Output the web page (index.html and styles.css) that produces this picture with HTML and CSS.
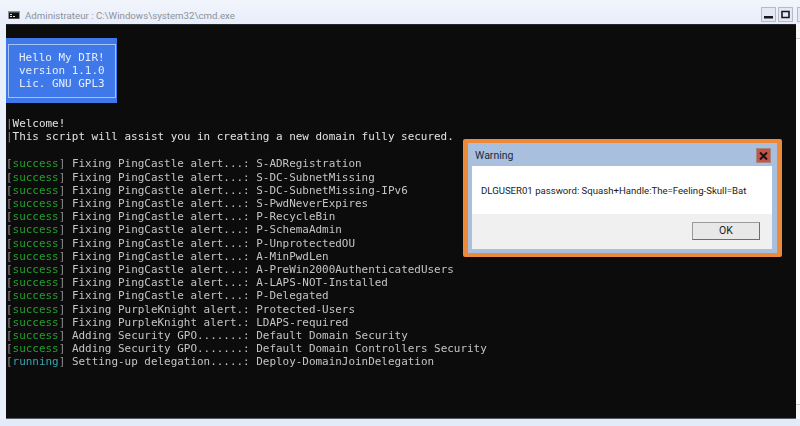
FILE: index.html
```html
<!DOCTYPE html>
<html lang="fr">
<head>
<meta charset="utf-8">
<title>cmd.exe</title>
<link rel="stylesheet" href="styles.css">
</head>
<body>
<div class="window">
  <header class="titlebar">
    <svg class="app-icon" width="12" height="8" viewBox="0 0 12 8"><rect width="12" height="8" fill="#8f939b"/><rect x="1" y="1.5" width="10" height="6" fill="#101010"/><path d="M2 3.5h2M2 5.5h2M5 5.5h2" stroke="#e8e8e8" stroke-width="1"/></svg>
    <span class="title">Administrateur : C:\Windows\system32\cmd.exe</span>
    <div class="controls">
      <span class="ctl"><svg width="9" height="9" viewBox="0 0 9 9"><rect x="0" y="6" width="9" height="2.5" fill="#15171c"/></svg></span>
      <span class="ctl"><svg width="9" height="9" viewBox="0 0 9 9"><path d="M1 1.5h7v6h-7z" fill="none" stroke="#15171c" stroke-width="1.6"/></svg></span>
      <span class="ctl ctl-close"><svg width="9" height="9" viewBox="0 0 9 9"><path d="M1 1l7 7M8 1l-7 7" stroke="#15171c" stroke-width="1.8"/></svg></span>
    </div>
  </header>
  <div class="body">
    <main class="terminal">
      <div class="banner"><div class="banner-inner">Hello My DIR!
version 1.1.0
Lic. GNU GPL3</div></div>
      <div class="intro"><span class="pipe">|</span>Welcome!
<span class="pipe">|</span>This script will assist you in creating a new domain fully secured.</div>
      <div class="log"><span class="br">[</span><span class="ok">success</span><span class="br">]</span> Fixing PingCastle alert...: S-ADRegistration
<span class="br">[</span><span class="ok">success</span><span class="br">]</span> Fixing PingCastle alert...: S-DC-SubnetMissing
<span class="br">[</span><span class="ok">success</span><span class="br">]</span> Fixing PingCastle alert...: S-DC-SubnetMissing-IPv6
<span class="br">[</span><span class="ok">success</span><span class="br">]</span> Fixing PingCastle alert...: S-PwdNeverExpires
<span class="br">[</span><span class="ok">success</span><span class="br">]</span> Fixing PingCastle alert...: P-RecycleBin
<span class="br">[</span><span class="ok">success</span><span class="br">]</span> Fixing PingCastle alert...: P-SchemaAdmin
<span class="br">[</span><span class="ok">success</span><span class="br">]</span> Fixing PingCastle alert...: P-UnprotectedOU
<span class="br">[</span><span class="ok">success</span><span class="br">]</span> Fixing PingCastle alert...: A-MinPwdLen
<span class="br">[</span><span class="ok">success</span><span class="br">]</span> Fixing PingCastle alert...: A-PreWin2000AuthenticatedUsers
<span class="br">[</span><span class="ok">success</span><span class="br">]</span> Fixing PingCastle alert...: A-LAPS-NOT-Installed
<span class="br">[</span><span class="ok">success</span><span class="br">]</span> Fixing PingCastle alert...: P-Delegated
<span class="br">[</span><span class="ok">success</span><span class="br">]</span> Fixing PurpleKnight alert.: Protected-Users
<span class="br">[</span><span class="ok">success</span><span class="br">]</span> Fixing PurpleKnight alert.: LDAPS-required
<span class="br">[</span><span class="ok">success</span><span class="br">]</span> Adding Security GPO.......: Default Domain Security
<span class="br">[</span><span class="ok">success</span><span class="br">]</span> Adding Security GPO.......: Default Domain Controllers Security
<span class="br">[</span><span class="run">running</span><span class="br">]</span> Setting-up delegation.....: Deploy-DomainJoinDelegation</div>
    </main>
    <div class="scrollbar">
      <div class="scroll-btn scroll-up"></div>
      <div class="scroll-track"></div>
      <div class="scroll-btn scroll-down"></div>
    </div>
  </div>
  <div class="footer"></div>
  <section class="dialog">
    <div class="dialog-frame">
      <div class="dialog-title">
        <span>Warning</span>
        <span class="dialog-close"><svg width="9" height="8" viewBox="0 0 9 8"><path d="M1 .5l7 7M8 .5l-7 7" stroke="#1d1012" stroke-width="2"/></svg></span>
      </div>
      <div class="dialog-message">DLGUSER01 password: Squash+Handle:The=Feeling-Skull=Bat</div>
      <div class="dialog-actions"><span class="ok-button">OK</span></div>
    </div>
  </section>
</div>
</body>
</html>
```
FILE: styles.css
```css
html, body {
  margin: 0;
  padding: 0;
  background: #e9effb;
}

.window {
  position: relative;
  width: 800px;
  height: 426px;
  overflow: hidden;
  display: flex;
  flex-direction: column;
  background: #e9effb;
}

.titlebar {
  height: 24px;
  flex: none;
  display: flex;
  align-items: center;
  padding-left: 8px;
  box-sizing: border-box;
  background: linear-gradient(#f2f5fc, #e7edfa);
}

.app-icon {
  flex: none;
  margin: 5px 5px 0 0;
}

.title {
  font: 9.7px Roboto, "Liberation Sans", sans-serif;
  color: #8d929c;
  white-space: nowrap;
  margin-top: 6px;
}

.controls {
  margin-left: auto;
  margin-right: -12px;
  margin-top: 5px;
  display: flex;
}

.ctl {
  width: 13px;
  height: 13px;
  border: 1px solid #b4bac6;
  display: flex;
  align-items: center;
  justify-content: center;
  background: #e3e8f3;
  margin-left: 2px;
}

.ctl-close {
  margin-left: 4px;
}

.body {
  height: 395px;
  flex: none;
  display: flex;
  padding-left: 6px;
}

.terminal {
  width: 790px;
  flex: none;
  box-sizing: border-box;
  background: #0c0c0c;
  border-top: 1px solid #23262b;
  border-bottom: 1px solid #555a63;
  color: #cfcfcf;
  font: 10.95px/13.2px "DejaVu Sans Mono", "Liberation Mono", monospace;
  filter: blur(0.35px);
}

.banner {
  width: 111px;
  height: 65px;
  margin-top: 13px;
  padding: 6px 1px 5px 2px;
  box-sizing: border-box;
  background: #3f78e8;
}

.banner-inner {
  height: 100%;
  box-sizing: border-box;
  border: 1px solid #a9c2f2;
  padding: 6px 0 0 10px;
  color: #e6eefc;
  white-space: pre;
}

.intro {
  margin-top: 14px;
  color: #e2e2e2;
  white-space: pre;
}

.pipe {
  color: #8a8a8a;
}

.log {
  margin-top: 14px;
  color: #c4c4c4;
  white-space: pre;
}

.br {
  color: #8f8f8f;
}

.ok {
  color: #23a02c;
}

.run {
  color: #35a6b4;
}

.scrollbar {
  flex: 1;
  display: flex;
  flex-direction: column;
  background: #fbfbfc;
}

.scroll-btn {
  height: 14px;
  flex: none;
  background: #f6f6f7;
}

.scroll-up {
  border-bottom: 1px solid #cfcfd2;
}

.scroll-down {
  border-top: 1px solid #cfcfd2;
}

.scroll-track {
  flex: 1;
}

.footer {
  flex: 1;
  background: #e3eafa;
}

.dialog {
  position: absolute;
  left: 463px;
  top: 139px;
  width: 319px;
  height: 118px;
  box-sizing: border-box;
  padding: 4px 5px;
  background: #ed8a3a;
  border-radius: 2px;
}

.dialog-frame {
  height: 100%;
  box-sizing: border-box;
  display: flex;
  flex-direction: column;
  padding: 0 5px 4px 4px;
  background: #a8c0de;
  font-family: Roboto, "Liberation Sans", sans-serif;
}

.dialog-title {
  height: 23px;
  flex: none;
  box-sizing: border-box;
  padding: 2px 1px 0 3px;
  display: flex;
  align-items: center;
  justify-content: space-between;
  font-size: 10.5px;
  color: #1b2a40;
}

.dialog-close {
  width: 15px;
  height: 15px;
  display: flex;
  align-items: center;
  justify-content: center;
  background: #c4544a;
  border: 1px solid #a5887f;
  box-sizing: border-box;
}

.dialog-message {
  height: 48px;
  flex: none;
  box-sizing: border-box;
  padding: 18px 0 0 9px;
  background: #fff;
  font-size: 9.6px;
  line-height: 14px;
  color: #1c1c1c;
  white-space: nowrap;
}

.dialog-actions {
  flex: 1;
  display: flex;
  align-items: flex-start;
  justify-content: flex-end;
  padding: 8px 12px 0 0;
  background: #f0f0f0;
}

.ok-button {
  width: 66px;
  height: 16px;
  border: 1.5px solid #6e6e6e;
  border-color: #9a9a9a #6e6e6e #6e6e6e #9a9a9a;
  background: #e8e8e8;
  font-size: 10.5px;
  line-height: 16px;
  text-align: center;
  color: #1a1a1a;
}
```
